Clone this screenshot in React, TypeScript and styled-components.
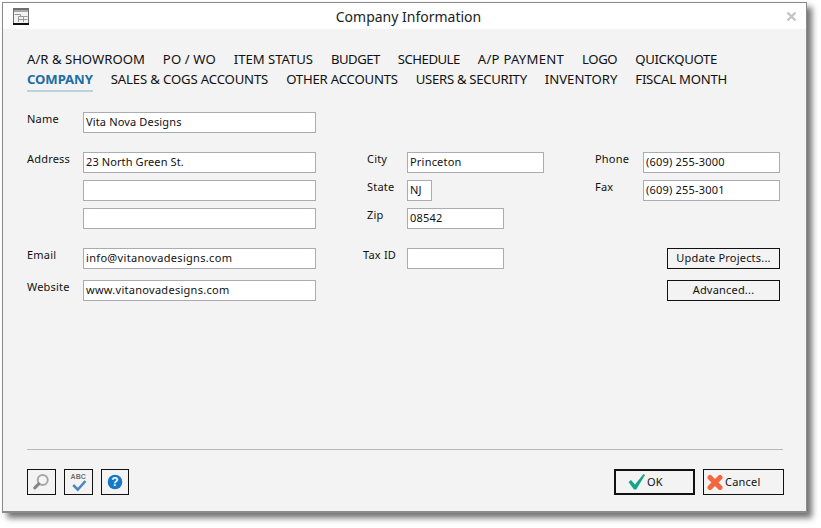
import React from "react";
import styled, { createGlobalStyle } from "styled-components";

const Global = createGlobalStyle`
  html, body { margin: 0; padding: 0; background: #ffffff; }
  #root { width: 821px; height: 528px; overflow: hidden; }
`;

const Page = styled.div`
  width: 821px;
  height: 528px;
  padding: 2px 0 0 2px;
  box-sizing: border-box;
`;

const Window = styled.div`
  width: 805px;
  height: 511px;
  box-sizing: border-box;
  border: 1px solid #8a8a8a;
  border-width: 1px 1px 2px 1px;
  background: #f3f3f3;
  box-shadow: 5px 5px 6px rgba(0, 0, 0, 0.55);
  display: flex;
  flex-direction: column;
  font-family: "Noto Sans", "Liberation Sans", sans-serif;
`;

const TitleBar = styled.div`
  height: 26px;
  flex: none;
  background: #ffffff;
  display: grid;
  grid-template-columns: 40px 1fr 40px;
  align-items: center;
`;

const TitleIcon = styled.svg`
  width: 16px;
  height: 17px;
  margin-left: 10px;
  display: block;
`;

const Title = styled.div`
  text-align: center;
  font-size: 14px;
  color: #222222;
  padding: 1px 0 0 8px;
`;

const CloseIcon = styled.svg`
  width: 11px;
  height: 11px;
  justify-self: end;
  margin-right: 9px;
  display: block;
`;

const Body = styled.div`
  flex: 1;
  display: flex;
  flex-direction: column;
  padding: 20px 23px 0 24px;
`;

const Tabs = styled.div`
  display: flex;
  flex-direction: column;
  height: 63px;
  flex: none;
`;

const TabRow = styled.div`
  display: flex;
  gap: 18px;
  height: 20px;
  line-height: 20px;
`;

const Tab = styled.div<{ $active?: boolean; $ls?: number }>`
  font-size: 13.15px;
  white-space: nowrap;
  letter-spacing: ${(p) => p.$ls ?? 0}px;
  height: ${(p) => (p.$active ? "21px" : "20px")};
  color: ${(p) => (p.$active ? "#1c6ea4" : "#111111")};
  font-weight: ${(p) => (p.$active ? 700 : 400)};
  border-bottom: ${(p) => (p.$active ? "2px solid #b9d2e2" : "none")};
`;

const Form = styled.div`
  display: grid;
  grid-template-columns: 56px 233px 47px 44px 137px 51px 48px 137px;
  grid-template-rows: 21px 19px 21px 7px 21px 7px 21px 19px 21px 11px 21px;
  flex: none;
`;

const Label = styled.label<{ $col: number; $row: number; $indent?: number }>`
  grid-column: ${(p) => p.$col};
  grid-row: ${(p) => p.$row};
  font-size: 11px;
  letter-spacing: 0.2px;
  color: #111111;
  line-height: 13px;
  padding-left: ${(p) => p.$indent ?? 0}px;
`;

const Field = styled.div<{ $col: number; $row: number; $w?: number; $ls?: number }>`
  grid-column: ${(p) => p.$col};
  grid-row: ${(p) => p.$row};
  width: ${(p) => (p.$w ? `${p.$w}px` : "100%")};
  height: 21px;
  box-sizing: border-box;
  border: 1px solid #a9adb2;
  background: #ffffff;
  padding: 0 2px 0 2px;
  font-size: 11px;
  letter-spacing: ${(p) => p.$ls ?? 0.2}px;
  line-height: 17px;
  color: #111111;
  white-space: nowrap;
`;

const ActionButton = styled.div<{ $row: number }>`
  grid-column: 8;
  grid-row: ${(p) => p.$row};
  justify-self: end;
  width: 113px;
  height: 21px;
  box-sizing: border-box;
  border: 1px solid #111111;
  font-size: 11px;
  letter-spacing: 0.2px;
  line-height: 17px;
  text-align: center;
  color: #111111;
`;

const Divider = styled.div`
  height: 1px;
  background: #b8b8b8;
  margin-top: auto;
  flex: none;
`;

const Footer = styled.div`
  display: flex;
  align-items: flex-start;
  height: 61px;
  flex: none;
  padding-top: 19px;
  box-sizing: border-box;
`;

const IconButtons = styled.div`
  display: flex;
  gap: 8px;
`;

const IconButton = styled.div<{ $w: number }>`
  width: ${(p) => p.$w}px;
  height: 26px;
  box-sizing: border-box;
  border: 1px solid #111111;
  display: flex;
  align-items: center;
  justify-content: center;
`;

const DialogButtons = styled.div`
  display: flex;
  gap: 8px;
  margin-left: auto;
  margin-right: -1px;
`;

const DialogButton = styled.div<{ $default?: boolean; $pad: number; $gap: number }>`
  width: 81px;
  height: 26px;
  box-sizing: border-box;
  border: ${(p) => (p.$default ? "2px solid #111111" : "1px solid #111111")};
  display: flex;
  align-items: center;
  gap: ${(p) => p.$gap}px;
  padding-left: ${(p) => p.$pad}px;
  padding-bottom: 2px;
  font-size: 11px;
  letter-spacing: 0.2px;
  color: #111111;
`;

const ButtonIcon = styled.svg`
  display: block;
  flex: none;
  margin-bottom: -2px;
`;

export default function App() {
  return (
    <Page>
      <Global />
      <Window>
        <TitleBar>
          <TitleIcon viewBox="0 0 16 17">
            <rect x="0" y="0" width="16" height="17" fill="#6f6f6f" />
            <rect x="0" y="15" width="16" height="2" fill="#111111" />
            <rect x="1" y="2" width="14" height="13" fill="#f2f2f2" />
            <rect x="1" y="2" width="14" height="2" fill="#a8a8a8" />
            <path d="M1.5 6.5h6v2M5.5 8.5h9M5.5 8.5v5.5M5.5 11.5h9M10.5 8.5v5.5" stroke="#999999" strokeWidth="1" fill="none" />
          </TitleIcon>
          <Title>Company Information</Title>
          <CloseIcon viewBox="0 0 11 11">
            <path d="M1.5 1.5l8 8M9.5 1.5l-8 8" stroke="#c4c4c4" strokeWidth="2.4" fill="none" />
          </CloseIcon>
        </TitleBar>
        <Body>
          <Tabs>
            <TabRow>
              <Tab>A/R &amp; SHOWROOM</Tab>
              <Tab $ls={0.1}>PO / WO</Tab>
              <Tab $ls={-0.05}>ITEM STATUS</Tab>
              <Tab $ls={-0.5}>BUDGET</Tab>
              <Tab $ls={-0.5}>SCHEDULE</Tab>
              <Tab $ls={0.25}>A/P PAYMENT</Tab>
              <Tab $ls={-0.4}>LOGO</Tab>
              <Tab $ls={-0.3}>QUICKQUOTE</Tab>
            </TabRow>
            <TabRow>
              <Tab $active $ls={-0.1}>COMPANY</Tab>
              <Tab $ls={-0.15}>SALES &amp; COGS ACCOUNTS</Tab>
              <Tab $ls={-0.2}>OTHER ACCOUNTS</Tab>
              <Tab $ls={-0.3}>USERS &amp; SECURITY</Tab>
              <Tab>INVENTORY</Tab>
              <Tab $ls={-0.25}>FISCAL MONTH</Tab>
            </TabRow>
          </Tabs>
          <Form>
            <Label $col={1} $row={1}>Name</Label>
            <Field $col={2} $row={1} $ls={0.15}>Vita Nova Designs</Field>

            <Label $col={1} $row={3}>Address</Label>
            <Field $col={2} $row={3} $ls={0.1}>23 North Green St.</Field>
            <Field $col={2} $row={5} />
            <Field $col={2} $row={7} />

            <Label $col={4} $row={3} $indent={4}>City</Label>
            <Field $col={5} $row={3}>Princeton</Field>
            <Label $col={4} $row={5} $indent={4}>State</Label>
            <Field $col={5} $row={5} $w={25}>NJ</Field>
            <Label $col={4} $row={7} $indent={4}>Zip</Label>
            <Field $col={5} $row={7} $w={97}>08542</Field>

            <Label $col={7} $row={3}>Phone</Label>
            <Field $col={8} $row={3}>(609) 255-3000</Field>
            <Label $col={7} $row={5}>Fax</Label>
            <Field $col={8} $row={5}>(609) 255-3001</Field>

            <Label $col={1} $row={9}>Email</Label>
            <Field $col={2} $row={9} $ls={0.32}>info@vitanovadesigns.com</Field>
            <Label $col={1} $row={11}>Website</Label>
            <Field $col={2} $row={11} $ls={0.28}>www.vitanovadesigns.com</Field>

            <Label $col={4} $row={9}>Tax ID</Label>
            <Field $col={5} $row={9} $w={97} />

            <ActionButton $row={9}>Update Projects...</ActionButton>
            <ActionButton $row={11}>Advanced...</ActionButton>
          </Form>
          <Divider />
          <Footer>
            <IconButtons>
              <IconButton $w={29}>
                <svg width="18" height="18" viewBox="0 0 18 18">
                  <circle cx="9.7" cy="7" r="5" fill="#f5f5f5" stroke="#a6a6a6" strokeWidth="2" />
                  <path d="M5.8 10.9L1.8 14.9" stroke="#858585" strokeWidth="3" strokeLinecap="round" />
                </svg>
              </IconButton>
              <IconButton $w={29}>
                <svg width="20" height="20" viewBox="0 0 20 20">
                  <text x="9.2" y="7" textAnchor="middle" fontFamily="'Liberation Sans', sans-serif" fontSize="7" fontWeight="700" fill="#6f6f6f">ABC</text>
                  <path d="M4.2 13l4.6 4.6 7.7-8.6" stroke="#4a86c0" strokeWidth="2.5" fill="none" />
                </svg>
              </IconButton>
              <IconButton $w={28}>
                <svg width="16" height="16" viewBox="0 0 16 16">
                  <circle cx="8" cy="8" r="7.3" fill="#1878c8" />
                  <text x="8" y="12.2" textAnchor="middle" fontFamily="'Liberation Sans', sans-serif" fontSize="12" fontWeight="700" fill="#ffffff">?</text>
                </svg>
              </IconButton>
            </IconButtons>
            <DialogButtons>
              <DialogButton $default $pad={12} $gap={1}>
                <ButtonIcon width="18" height="16" viewBox="0 0 18 16">
                  <path d="M0.5 8L3 6L7 10.5L15.5 0L17 1L8.2 15.5L6 15.5Z" fill="#16a588" />
                </ButtonIcon>
                OK
              </DialogButton>
              <DialogButton $pad={3} $gap={2}>
                <ButtonIcon width="16" height="16" viewBox="0 0 16 16">
                  <path d="M3 3.5l10 10M13 3.5l-10 10" stroke="#f5663f" strokeWidth="5" strokeLinecap="round" fill="none" />
                </ButtonIcon>
                Cancel
              </DialogButton>
            </DialogButtons>
          </Footer>
        </Body>
      </Window>
    </Page>
  );
}
